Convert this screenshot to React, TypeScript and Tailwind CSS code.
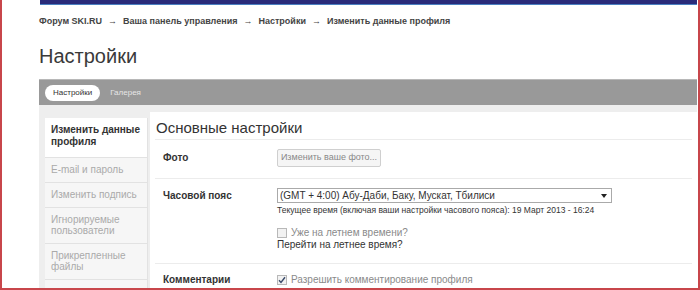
import React from 'react';

const crumbs = ['Форум SKI.RU', 'Ваша панель управления', 'Настройки', 'Изменить данные профиля'];

const sideItems = ['E-mail и пароль', 'Изменить подпись', 'Игнорируемые пользователи', 'Прикрепленные файлы'];

const Checkbox = ({ checked }: { checked?: boolean }) => (
  <span className="w-[10px] h-[10px] border border-[#b8b8b8] bg-[#f2f2f2] flex items-center justify-center shrink-0">
    {checked && (
      <svg width="8" height="8" viewBox="0 0 8 8">
        <path d="M1 4.2 L3 6.4 L7 1.2" fill="none" stroke="#3a4a6a" strokeWidth="1.4" />
      </svg>
    )}
  </span>
);

export default function App() {
  return (
    <div className="relative w-[700px] h-[290px] overflow-hidden bg-white text-[#333] font-['Liberation_Sans',Arial,sans-serif]">
      <div className="pl-[39px] pr-[3px]">
        {/* верхняя полоса */}
        <div className="ml-[1px] h-[5px] bg-[#2a2b7a] border-b border-[#4a7fc0]" />

        {/* хлебные крошки */}
        <nav className="mt-[10px] flex items-center text-[9px] leading-[12px] font-bold text-[#444]">
          {crumbs.map((c, i) => (
            <React.Fragment key={c}>
              {i > 0 && <span className="mx-[6px] font-normal">→</span>}
              <span>{c}</span>
            </React.Fragment>
          ))}
        </nav>

        <h1 className="mt-[17px] text-[20px] leading-[24px] text-[#3a3a3a]">Настройки</h1>

        {/* вкладки */}
        <div className="mt-[11px] h-[26px] bg-[#999999] border-t border-[#b8b8b8] flex items-center pl-[6px] gap-[10px] text-[8px]">
          <span className="h-[16px] px-[8px] rounded-full bg-white text-[#333] flex items-center">Настройки</span>
          <span className="text-[#e6e6e6]">Галерея</span>
        </div>

        <div className="flex bg-[#eeeeee] pt-[7px] h-[190px]">
          {/* боковое меню */}
          <aside className="ml-[6px] mt-[6px] w-[103px] bg-[#f6f6f6] border-r border-[#e2e2e2] self-stretch">
            <div className="bg-white px-[6px] pt-[6px] pb-[9px] text-[10px] leading-[12px] font-bold text-[#333] border-b border-[#e2e2e2]">
              Изменить данные профиля
            </div>
            {sideItems.map((label) => (
              <div
                key={label}
                className="px-[6px] pt-[6px] pb-[7px] text-[10px] leading-[11px] text-[#aaaaaa] border-b border-[#e2e2e2]"
              >
                {label}
              </div>
            ))}
          </aside>

          {/* основная панель */}
          <main className="ml-[2px] flex-1 bg-white">
            <h2 className="mx-[5px] pl-[1px] pt-[7px] pb-[2px] text-[15px] leading-[18px] text-[#333] border-b border-[#ececec]">
              Основные настройки
            </h2>

            <div className="mx-[5px] flex pt-[9px] pb-[11px] border-b border-[#ececec]">
              <div className="w-[122px] pl-[8px] pt-[3px] text-[10px] leading-[12px] font-bold">Фото</div>
              <button className="h-[18px] w-[104px] border border-[#cfcfcf] bg-[#f5f5f5] text-[9px] text-[#888] rounded-[2px]">
                Изменить ваше фото...
              </button>
            </div>

            <div className="mx-[5px] flex pt-[9px] pb-[12px] border-b border-[#ececec]">
              <div className="w-[122px] pl-[8px] pt-[2px] text-[10px] leading-[12px] font-bold">Часовой пояс</div>
              <div className="flex flex-col">
                <div className="w-[335px] h-[15px] border border-[#aaaaaa] flex items-center justify-between pl-[2px] pr-[4px] text-[10px] text-[#333]">
                  <span>(GMT + 4:00) Абу-Даби, Баку, Мускат, Тбилиси</span>
                  <svg width="6" height="4" viewBox="0 0 6 4">
                    <path d="M0 0 L6 0 L3 4 Z" fill="#222" />
                  </svg>
                </div>
                <div className="mt-[1px] text-[8.5px] leading-[12px] text-[#333]">
                  Текущее время (включая ваши настройки часового пояса): 19 Март 2013 - 16:24
                </div>
                <div className="mt-[11px] flex items-center gap-[4px] text-[10px] leading-[12px] text-[#8a8a8a]">
                  <Checkbox />
                  <span>Уже на летнем времени?</span>
                </div>
                <div className="text-[10px] leading-[12px] text-[#333]">Перейти на летнее время?</div>
              </div>
            </div>

            <div className="mx-[5px] flex pt-[9px]">
              <div className="w-[122px] pl-[8px] pt-[1px] text-[10px] leading-[12px] font-bold">Комментарии</div>
              <div className="flex items-center gap-[4px] text-[10px] leading-[12px] text-[#8a8a8a]">
                <Checkbox checked />
                <span>Разрешить комментирование профиля</span>
              </div>
            </div>
          </main>
        </div>
      </div>

      {/* красная рамка поверх скриншота */}
      <div className="absolute inset-0 border-l-2 border-r-2 border-b-2 border-[#c8464b] pointer-events-none" />
    </div>
  );
}
